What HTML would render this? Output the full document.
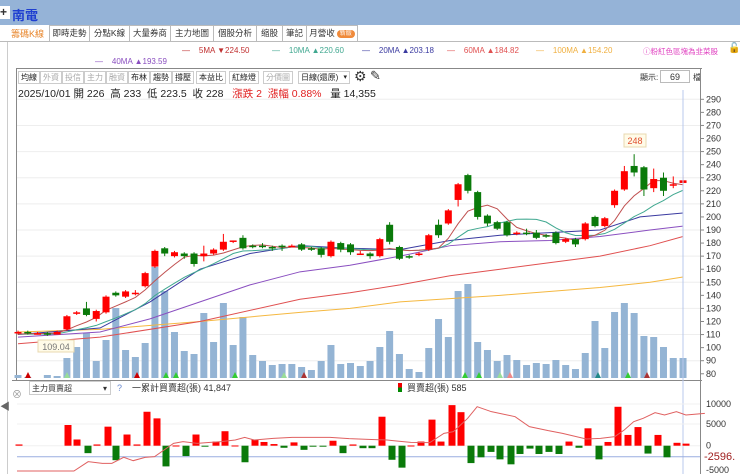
<!DOCTYPE html>
<html><head><meta charset="utf-8">
<style>
*{margin:0;padding:0;box-sizing:border-box}
body{width:740px;height:474px;overflow:hidden;background:#fff;font-family:"Liberation Sans","Noto Sans CJK TC",sans-serif;position:relative;font-size:11px;color:#333}
.a{position:absolute;white-space:nowrap}
.top{left:0;top:0;width:740px;height:25px;background:#95b3d7}
.tab{position:absolute;top:25px;height:16px;border:1px solid #bbb;border-bottom:none;font-size:8.5px;line-height:15px;padding:0;color:#333;background:#fff;text-align:center;white-space:nowrap;overflow:hidden}
.btn{position:absolute;top:71px;height:13px;border:1px solid #ccc;font-size:8px;line-height:12px;padding:0 2px;color:#222;background:#fff}
.btn.d{color:#aaa}
.lg{position:absolute;top:46px;font-size:8px;white-space:nowrap}
</style></head><body>
<div class="a top"></div>
<div class="a" style="left:0;top:6px;width:10px;height:13px;background:#fff;font-size:12px;line-height:12px;font-weight:bold">+</div>
<div class="a" style="left:12px;top:5px;font-size:13px;font-weight:bold;color:#1f3fd0">南電</div>
<div class="a" style="left:7px;top:41px;width:1px;height:433px;background:#ccc"></div>
<div class="a" style="left:0;top:398px;font-size:10px;color:#666">◀</div>
<div class="a" style="left:11px;top:27px;font-size:9px;color:#e8852a">籌碼K線</div>
<div class="tab" style="left:49px;width:41px">即時走勢</div>
<div class="tab" style="left:89px;width:41px">分點K線</div>
<div class="tab" style="left:129px;width:42px">大量券商</div>
<div class="tab" style="left:170px;width:44px">主力地圖</div>
<div class="tab" style="left:213px;width:44px">個股分析</div>
<div class="tab" style="left:256px;width:27px">缩股</div>
<div class="tab" style="left:282px;width:25px">筆記</div>
<div class="tab" style="left:306px;width:52px">月營收<span style="display:inline-block;background:#f08a3a;color:#fff;border-radius:6px;font-size:6px;line-height:8px;padding:0 3px;margin-left:2px;vertical-align:1px">新版</span></div>
<div class="a" style="left:0;top:41px;width:740px;height:1px;background:#bbb"></div>
<div class="lg" style="left:182px;color:#c03030">—&nbsp;&nbsp;&nbsp; 5MA ▼224.50</div>
<div class="lg" style="left:272px;color:#40a890">—&nbsp;&nbsp;&nbsp; 10MA ▲220.60</div>
<div class="lg" style="left:362px;color:#3a3aa0">—&nbsp;&nbsp;&nbsp; 20MA ▲203.18</div>
<div class="lg" style="left:447px;color:#e05050">—&nbsp;&nbsp;&nbsp; 60MA ▲184.82</div>
<div class="lg" style="left:536px;color:#f0b040">—&nbsp;&nbsp;&nbsp; 100MA ▲154.20</div>
<div class="lg" style="left:643px;color:#e040c0;font-size:7.5px">ⓘ粉紅色區塊為韭菜股</div>
<div class="a" style="top:43px;left:728px;font-size:10px">🔓</div>
<div class="lg" style="top:57px;left:95px;color:#8a4fc0">—&nbsp;&nbsp;&nbsp; 40MA ▲193.59</div>
<div class="a" style="left:16px;top:68px;width:686px;height:1px;background:#888"></div>
<div class="a" style="left:16px;top:68px;width:1px;height:312px;background:#888"></div>
<div class="btn" style="left:18px">均線</div><div class="btn d" style="left:40px">外資</div><div class="btn d" style="left:62px">投信</div><div class="btn d" style="left:84px">主力</div><div class="btn d" style="left:106px">融資</div><div class="btn" style="left:128px">布林</div><div class="btn" style="left:150px">趨勢</div><div class="btn" style="left:172px">撐壓</div><div class="btn" style="left:196px">本益比</div><div class="btn" style="left:229px">紅綠燈</div><div class="btn d" style="left:263px">分價圖</div>
<div class="btn" style="left:298px;width:52px">日線(還原)<span style="float:right;font-size:7px">▾</span></div>
<div class="a" style="left:354px;top:68px;font-size:14px">⚙</div>
<div class="a" style="left:370px;top:68px;font-size:13px">✎</div>
<div class="a" style="left:640px;top:72px;font-size:8px">顯示:</div>
<div class="a" style="left:660px;top:70px;width:30px;height:13px;border:1px solid #bbb;font-size:9px;text-align:center;line-height:12px">69</div>
<div class="a" style="left:693px;top:72px;font-size:8px">檔</div>
<div class="a" style="left:18px;top:86px;font-size:10.5px;color:#222">2025/10/01 開 226&nbsp; 高 233&nbsp; 低 223.5&nbsp; 收 228&nbsp;&nbsp; <span style="color:#e02020">漲跌 2&nbsp; 漲幅 0.88%</span>&nbsp;&nbsp; 量 14,355</div>
<div class="a" style="left:12px;top:380px;width:690px;height:1px;background:#888"></div>
<div class="a" style="left:12px;top:386px;font-size:10px;color:#999">⊗</div>
<div class="a" style="left:29px;top:381px;width:82px;height:14px;border:1px solid #ccc;font-size:8px;line-height:13px;padding-left:2px">主力買賣超<span style="float:right;padding-right:3px">▾</span></div>
<div class="a" style="left:117px;top:383px;font-size:9px;color:#6a8ad0">?</div>
<div class="a" style="left:132px;top:381px;font-size:9px;color:#333">一累計買賣超(張) 41,847</div>
<div class="a" style="left:398px;top:381px;font-size:9px;color:#333"><span style="display:inline-block;width:4px;height:9px;background:linear-gradient(#e00 50%,#080 50%);vertical-align:-1px"></span>&nbsp; 買賣超(張) 585</div>
<svg id="s" class="a" style="left:0;top:0" width="740" height="474"></svg>
<script>
var D=[[111,112,113,110],[112,111,113,110],[111,111,112,110],[111,110,112,109],[110,112,113,110],[114,124,125,113],[126,127,128,125],[130,125,135,124],[122,128,129,120],[127,139,140,126],[142,140,143,139],[139,143,144,138],[142,142,144,140],[147,157,158,146],[162,174,175,161],[176,172,177,170],[170,173,174,169],[172,170,173,168],[172,164,173,162],[170,172,178,166],[172,175,176,171],[175,181,187,174],[181,182,182,180],[184,176,186,175],[178,177,179,176],[178,177,180,176],[177,176,178,174],[178,177,179,174],[178,178,179,177],[179,175,180,174],[176,175,177,174],[176,171,177,169],[170,181,182,169],[180,175,181,173],[179,173,180,171],[172,172,174,171],[172,170,173,168],[170,183,184,169],[194,181,196,179],[177,168,178,167],[170,169,171,168],[171,172,173,170],[175,186,187,174],[194,186,198,184],[195,205,206,194],[213,225,226,208],[232,220,233,218],[219,200,220,198],[201,195,202,193],[196,191,197,190],[196,186,197,185],[188,188,189,186],[188,187,191,186],[188,184,190,183],[186,185,187,184],[188,180,189,179],[181,183,184,180],[183,179,184,177],[183,195,196,182],[200,193,201,192],[193,199,200,192],[209,220,221,207],[221,235,239,220],[239,234,248,231],[238,221,239,216],[222,229,237,219],[230,220,234,216],[225,225,231,222],[226,228,232,224]];
var V=[375,377,378,375,376,358,347,333,361,340,308,350,357,343,267,291,332,351,354,313,342,303,345,317,355,361,365,364,364,367,370,361,345,364,363,366,361,347,331,354,369,372,348,319,337,291,284,342,350,361,355,360,365,363,364,360,365,369,353,321,348,312,303,313,336,337,347,358,358];
function X(i){return 18+9.78*i}function Y(p){return 99.3+(290-p)*1.307}
var h='';
for(var p=80;p<=290;p+=10){var y=Y(p);if(p%20==10)h+='<line x1="17" x2="700" y1="'+y+'" y2="'+y+'" stroke="#eee"/>';h+='<line x1="700" x2="704" y1="'+y+'" y2="'+y+'" stroke="#888"/><text x="706" y="'+(y+3)+'" font-size="9" fill="#333">'+p+'</text>';}
h+='<line x1="700.5" x2="700.5" y1="68" y2="474" stroke="#888"/>';
for(var i=0;i<69;i++)h+='<rect x="'+(X(i)-3.5)+'" y="'+V[i]+'" width="7" height="'+(378-V[i])+'" fill="#94b4d4"/>';
function L(pts,c){var s='';for(var k=0;k<pts.length;k+=2)s+=pts[k]+','+Y(pts[k+1])+' ';return '<polyline points="'+s+'" fill="none" stroke="'+c+'" stroke-width="1"/>'}
h+=L([18,112,100,114,200,120,300,127,350,130,400,135,500,140,600,146,650,150,683,154],'#f5b840');
h+=L([18,103,100,108,200,120,300,137,350,142,400,148,450,155,500,160,550,165,600,170,650,178,683,185],'#e05050');
h+=L([18,108,100,112,150,122,200,135,250,148,300,158,350,163,400,170,450,178,500,181,550,182,600,185,650,190,683,193],'#8a4fc0');
h+=L([18,110,100,115,150,135,200,160,250,172,300,178,350,176,400,175,450,182,500,186,550,188,600,190,640,200,683,203],'#3a3aa0');
function MA(n,c){var pts=[];for(var i=0;i<69;i++){var s=0;for(var j=i-n+1;j<=i;j++)s+=j<0?110:D[j][1];pts.push(X(i),s/n);}return L(pts,c)}
h+=MA(10,'#40a890');h+=MA(5,'#c05050');
for(var i=0;i<69;i++){var d=D[i],x=X(i),up=d[1]>=d[0],c=up?'#f00':'#0a7a0a';var t=Y(Math.max(d[0],d[1])),b=Y(Math.min(d[0],d[1]));
h+='<line x1="'+x+'" x2="'+x+'" y1="'+Y(d[2])+'" y2="'+Y(d[3])+'" stroke="'+c+'"/><rect x="'+(x-3.5)+'" y="'+t+'" width="7" height="'+Math.max(b-t,1.5)+'" fill="'+c+'"/>';}
h+='<rect x="624" y="134" width="22" height="13" fill="#fffbe8" stroke="#e8d8b0"/><text x="635" y="144" font-size="9" fill="#e05030" text-anchor="middle">248</text>';
h+='<rect x="38" y="340" width="36" height="12" fill="#fffbe8" stroke="#e8d8b0"/><text x="56" y="350" font-size="9" fill="#777" text-anchor="middle">109.04</text>';
h+='<line x1="683" x2="683" y1="90" y2="474" stroke="#b8c8ec"/>';
var tri=[[28,'#c00'],[67,'#9d9'],[137,'#c00'],[166,'#3c3'],[176,'#3c3'],[235,'#3c3'],[284,'#9d9'],[304,'#a33'],[465,'#3c3'],[479,'#3c3'],[500,'#9d9'],[510,'#e88'],[598,'#288'],[628,'#3c3'],[647,'#a33']];
tri.forEach(function(t){h+='<polygon points="'+(t[0]-3)+',378 '+(t[0]+3)+',378 '+t[0]+',372" fill="'+t[1]+'"/>'});
var Z=445.7,K=41.4/10000;
[[10000,404],[5000,424],[0,445.7]].forEach(function(a){h+='<line x1="17" x2="700" y1="'+a[1]+'" y2="'+a[1]+'" stroke="#f0f0f0"/><text x="706" y="'+(a[1]+3)+'" font-size="9" fill="#333">'+a[0]+'</text>'});
h+='<text x="706" y="473" font-size="9" fill="#333">-5000</text>';
h+='<line x1="17" x2="700" y1="456.7" y2="456.7" stroke="#9aaee0"/>';
var B=[[19,300],[68,5000],[77,1500],[88,-1800],[97,300],[108,4600],[116,-3500],[127,2700],[137,300],[147,8200],[157,6600],[166,-5000],[176,50],[186,-2500],[196,2700],[205,-200],[216,1000],[225,3500],[235,50],[245,-4000],[255,1500],[264,900],[274,400],[284,-500],[294,800],[304,-1000],[313,-100],[323,-100],[333,1200],[343,-1800],[353,300],[363,-600],[372,-600],[382,7000],[392,-3400],[402,-5300],[411,50],[421,1000],[432,6300],[441,1000],[452,9800],[461,8100],[471,-4200],[481,-2800],[491,-1500],[500,-3300],[511,-4500],[520,-2000],[530,-700],[539,-2000],[549,-1500],[559,-2000],[569,1000],[579,-500],[588,4200],[599,-3300],[608,900],[618,9400],[628,2600],[638,4500],[648,-1900],[658,2600],[667,-2800],[677,700],[686,500]];
B.forEach(function(b){var hh=Math.abs(b[1])*K;h+='<rect x="'+(b[0]-3.5)+'" y="'+(b[1]>0?Z-hh:Z)+'" width="7" height="'+Math.max(hh,1)+'" fill="'+(b[1]>0?'#f00':'#0a7a0a')+'"/>'});
var C=[0,333,120,333,150,305,180,310,200,310,225,292,245,302,270,292,290,290,330,250,350,245,380,250,400,248,430,245,460,240,480,232,500,240,540,235,580,232,620,232,660,232,700,236,740,238,780,240,800,243,830,247,870,248,900,220,920,215,950,175,970,140,1000,155,1050,170,1080,200,1120,212,1150,220,1200,237,1230,235,1260,230,1280,210,1300,185,1320,175,1345,158,1365,165,1390,155,1410,165,1450,160];
var s='';for(var k=0;k<C.length;k+=2)s+=(C[k]/2.108+17)+','+(360+C[k+1]/3)+' ';
h+='<polyline points="'+s+'" fill="none" stroke="#e06060" stroke-width="1"/>';
h+='<rect x="702" y="450" width="38" height="12" fill="#fff"/><text x="704" y="460" font-size="11" fill="#a02020">-2596.</text>';
document.getElementById('s').innerHTML=h;
</script>
</body></html>
